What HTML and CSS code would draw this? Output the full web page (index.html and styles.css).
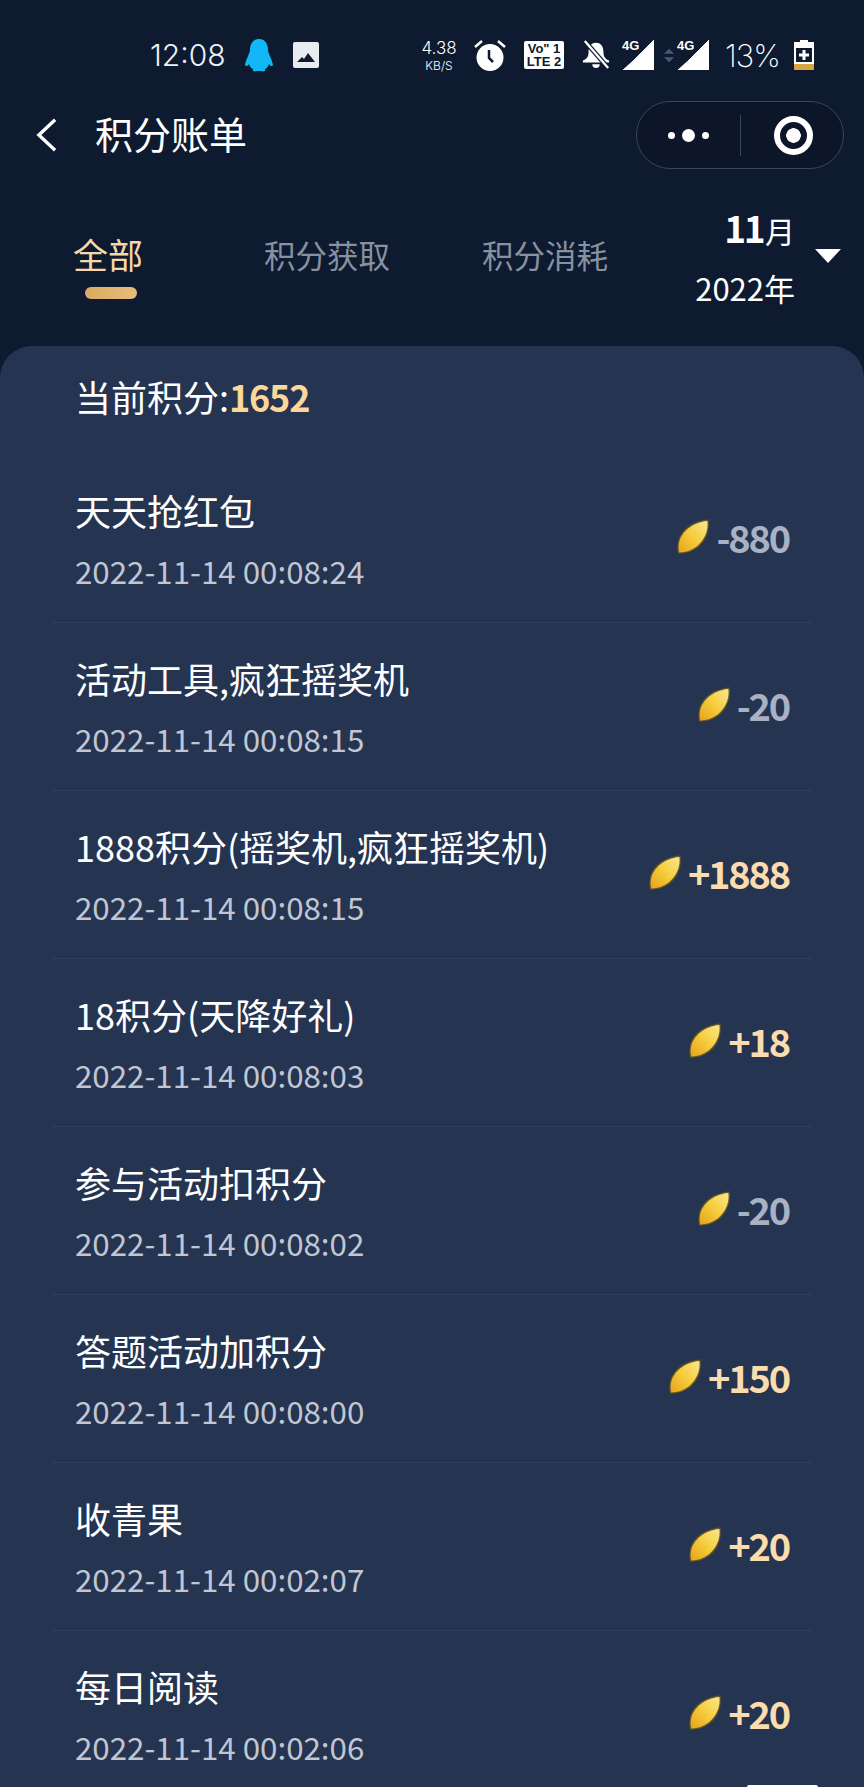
FILE: index.html
```html
<!DOCTYPE html>
<html>
  <head>
    <title>积分账单</title>
    <link rel="stylesheet" href="styles.css">
  </head>
  <body>
    <svg class="defs" width="0" height="0">
      <defs>
        <linearGradient id="grain-fill" x1="0" y1="1" x2="1" y2="0">
          <stop offset="0" stop-color="#e5a31c"/>
          <stop offset="0.5" stop-color="#f6cd3c"/>
          <stop offset="1" stop-color="#f9e88f"/>
        </linearGradient>
        <symbol id="grain" viewBox="0 0 30 33">
          <path d="M1 32.500C-3 15 11 2 29.500 0.500C32 15 22 33 1 32.500Z" fill="#6b5a24"/>
          <path d="M2 31.500C-1.500 16 12 3.500 28.500 2C30.500 15 20 31.500 2 31.500Z" fill="url(#grain-fill)"/>
        </symbol>
      </defs>
    </svg>
    <div class="page">
      <div class="status-bar">
        <span class="clock">12:08</span>
        <svg class="qq" viewBox="0 0 30 34"><path d="M15 1C8 1 6 7 6 12C6 15 2 21 1 27C2 29 4 28 5 26C6 29 7 30 9 31C8 33 10 34 13 33H17C20 34 22 33 21 31C23 30 24 29 25 26C26 28 28 29 29 27C28 21 24 15 24 12C24 7 22 1 15 1Z" fill="#12b7f5"/></svg>
        <svg class="gallery" viewBox="0 0 26 26"><rect width="26" height="26" rx="2" fill="#e8ebf0"/><path d="M4 20L9 15L11 17L15 11L22 20Z" fill="#0d1a30"/></svg>
        <span class="spacer"></span>
        <span class="speed"><b>4.38</b><i>KB/S</i></span>
        <svg class="alarm" viewBox="0 0 32 32"><circle cx="16" cy="18.500" r="13.500" fill="#fff"/><path d="M15 11V19L19 23" fill="none" stroke="#0d1a30" stroke-width="2.500"/><path d="M1 8L8 2M31 8L24 2" stroke="#fff" stroke-width="2.500"/></svg>
        <span class="volte"><span>Vo" 1</span><span>LTE 2</span></span>
        <svg class="bell" viewBox="0 0 30 32"><path d="M15 3C9 3 7 8 7 13C7 18 5 20 1 22V24H29V22C25 20 23 18 23 13C23 8 21 3 15 3ZM11 26C11 29 13 30 15 30C17 30 19 29 19 26Z" fill="#fff"/><path d="M3 1L28 30" stroke="#0d1a30" stroke-width="5"/><path d="M3 1L28 30" stroke="#fff" stroke-width="2.500"/></svg>
        <span class="signal"><em>4G</em></span>
        <svg class="updown" viewBox="0 0 12 16"><path d="M6 0L12 6H0ZM6 16L0 10H12Z" fill="#4c5873"/></svg>
        <span class="signal"><em>4G</em></span>
        <span class="battery-text">13%</span>
        <svg class="battery" viewBox="0 0 20 30"><path d="M6 0H14V2H20V30H0V2H6Z" fill="#fff"/><rect x="0" y="24" width="20" height="6" fill="#d9a441"/><rect x="2" y="8" width="16" height="14" fill="#0d1a30"/><path d="M8.500 10H11.500V13.500H15V16.500H11.500V20H8.500V16.500H5V13.500H8.500Z" fill="#fff"/></svg>
      </div>

      <div class="nav-bar">
        <svg class="back" viewBox="0 0 22 36"><path d="M20 2L3 18L20 34" fill="none" stroke="#fff" stroke-width="3.500"/></svg>
        <h1>积分账单</h1>
        <div class="capsule">
          <div class="capsule-part"><i class="dot"></i><i class="dot big"></i><i class="dot"></i></div>
          <div class="capsule-part"><i class="target"></i></div>
        </div>
      </div>

      <div class="tabs">
        <div class="tab active">全部</div>
        <div class="tab">积分获取</div>
        <div class="tab">积分消耗</div>
        <div class="date-picker">
          <div class="date-text">
            <div class="month"><b>11</b>月</div>
            <div class="year">2022年</div>
          </div>
          <i class="arrow"></i>
        </div>
      </div>

      <div class="sheet">
        <div class="current">当前积分:<b>1652</b></div>

        <div class="row">
          <div class="row-info"><div class="row-title">天天抢红包</div><div class="row-time">2022-11-14 00:08:24</div></div>
          <div class="row-points minus"><svg class="grain"><use href="#grain"/></svg>-880</div>
        </div>
        <div class="row">
          <div class="row-info"><div class="row-title">活动工具,疯狂摇奖机</div><div class="row-time">2022-11-14 00:08:15</div></div>
          <div class="row-points minus"><svg class="grain"><use href="#grain"/></svg>-20</div>
        </div>
        <div class="row">
          <div class="row-info"><div class="row-title">1888积分(摇奖机,疯狂摇奖机)</div><div class="row-time">2022-11-14 00:08:15</div></div>
          <div class="row-points"><svg class="grain"><use href="#grain"/></svg>+1888</div>
        </div>
        <div class="row">
          <div class="row-info"><div class="row-title">18积分(天降好礼)</div><div class="row-time">2022-11-14 00:08:03</div></div>
          <div class="row-points"><svg class="grain"><use href="#grain"/></svg>+18</div>
        </div>
        <div class="row">
          <div class="row-info"><div class="row-title">参与活动扣积分</div><div class="row-time">2022-11-14 00:08:02</div></div>
          <div class="row-points minus"><svg class="grain"><use href="#grain"/></svg>-20</div>
        </div>
        <div class="row">
          <div class="row-info"><div class="row-title">答题活动加积分</div><div class="row-time">2022-11-14 00:08:00</div></div>
          <div class="row-points"><svg class="grain"><use href="#grain"/></svg>+150</div>
        </div>
        <div class="row">
          <div class="row-info"><div class="row-title">收青果</div><div class="row-time">2022-11-14 00:02:07</div></div>
          <div class="row-points"><svg class="grain"><use href="#grain"/></svg>+20</div>
        </div>
        <div class="row">
          <div class="row-info"><div class="row-title">每日阅读</div><div class="row-time">2022-11-14 00:02:06</div></div>
          <div class="row-points"><svg class="grain"><use href="#grain"/></svg>+20</div>
        </div>
      </div>
      <div class="peek"></div>
    </div>
  </body>
</html>
```

FILE: styles.css
```css
* {
  box-sizing: border-box;
}
body {
  margin: 0;
  background-color: #0d1a30;
  font-family: "Noto Sans CJK SC", "Noto Sans", sans-serif;
  color: #fff;
}
.defs {
  display: block;
  height: 0;
}
.page {
  position: relative;
  width: 864px;
  height: 1787px;
  overflow: hidden;
}

/* status bar */
.status-bar {
  display: flex;
  align-items: center;
  height: 100px;
  padding: 28px 50px 18px 150px;
}
.status-bar > * {
  flex: none;
}
.clock {
  font-family: "Inter", sans-serif;
  font-size: 30px;
  font-weight: 300;
  color: #eef1f5;
}
.qq {
  width: 30px;
  height: 34px;
  margin-left: 18px;
}
.gallery {
  width: 26px;
  height: 26px;
  margin-left: 19px;
}
.status-bar > .spacer {
  flex: 1;
}
.speed {
  display: flex;
  flex-direction: column;
  align-items: center;
  width: 36px;
  font-family: "Inter", sans-serif;
  font-weight: 300;
  line-height: normal;
}
.speed b {
  font-size: 17px;
  font-weight: 300;
}
.speed i {
  font-size: 12px;
  font-style: normal;
}
.alarm {
  width: 32px;
  height: 32px;
  margin-left: 17px;
}
.volte {
  display: flex;
  flex-direction: column;
  justify-content: center;
  width: 40px;
  height: 28px;
  margin-left: 18px;
  border-radius: 2px;
  background-color: #fff;
  color: #0d1a30;
  font-family: "Liberation Sans", sans-serif;
  font-size: 13px;
  font-weight: 700;
  line-height: 13px;
  text-align: center;
}
.bell {
  width: 28px;
  height: 32px;
  margin: 0 13px 0 18px;
}
.signal {
  position: relative;
  width: 31px;
  height: 30px;
  background: linear-gradient(to bottom right, transparent 49.5%, #fff 50%);
}
.signal em {
  position: absolute;
  top: -2px;
  left: -1px;
  font-family: "Liberation Sans", sans-serif;
  font-size: 13px;
  font-style: normal;
  font-weight: 700;
}
.updown {
  width: 10px;
  height: 15px;
  margin: 0 4px 0 10px;
}
.battery-text {
  width: 60px;
  margin-left: 16px;
  font-family: "Inter", sans-serif;
  font-size: 31px;
  font-weight: 200;
  letter-spacing: -1px;
}
.battery {
  width: 20px;
  height: 30px;
  margin-left: 9px;
}

/* nav */
.nav-bar {
  display: flex;
  align-items: center;
  height: 70px;
  padding: 0 20px 0 36px;
}
.back {
  width: 21px;
  height: 36px;
}
.nav-bar h1 {
  flex: 1;
  margin: 0 0 4px 38px;
  font-size: 38px;
  font-weight: 400;
  line-height: 1;
}
.capsule {
  display: flex;
  align-items: center;
  width: 208px;
  height: 68px;
  border: 1px solid #3a465c;
  border-radius: 34px;
  background-color: #0c1628;
}
.capsule-part {
  display: flex;
  flex: 1;
  align-items: center;
  justify-content: center;
  gap: 7px;
  height: 41px;
}
.capsule-part:first-child {
  border-right: 1px solid #3a465c;
}
.dot {
  width: 7px;
  height: 7px;
  border-radius: 50%;
  background-color: #fff;
}
.dot.big {
  width: 13px;
  height: 13px;
}
.target {
  display: block;
  width: 39px;
  height: 39px;
  margin-left: 4px;
  border: 6px solid #fff;
  border-radius: 50%;
  background: radial-gradient(circle, #fff 0 7px, transparent 7.500px);
}

/* tabs */
.tabs {
  display: flex;
  gap: 92px;
  height: 176px;
  padding: 0 23px 0 73px;
}
.tab {
  position: relative;
  flex: none;
  margin-top: 63px;
  height: 42px;
  font-size: 31.5px;
  line-height: 42px;
  color: #87919f;
}
.tab.active {
  margin-right: 29px;
  font-size: 35px;
  color: #f7d8a8;
}
.tab.active::after {
  content: "";
  position: absolute;
  left: 12px;
  top: 54px;
  width: 52px;
  height: 12px;
  border-radius: 6px;
  background: linear-gradient(to right, #dcaa62, #e6bd7a);
}
.date-picker {
  display: flex;
  flex: 1;
  align-items: center;
  justify-content: flex-end;
  align-self: flex-start;
  margin-left: -92px;
  padding-top: 27px;
}
.date-text {
  text-align: right;
}
.month {
  font-size: 30px;
  line-height: 60px;
}
.month b {
  font-size: 37px;
  font-weight: 700;
  letter-spacing: -2.500px;
  margin-right: 2px;
}
.year {
  font-size: 31px;
  line-height: 55px;
}
.arrow {
  width: 0;
  height: 0;
  margin-left: 20px;
  border-left: 13.500px solid transparent;
  border-right: 13.500px solid transparent;
  border-top: 14px solid #fff;
}

/* list */
.sheet {
  height: 1441px;
  padding: 0 52px;
  overflow: hidden;
  border-radius: 32px 32px 0 0;
  background-color: #243451;
}
.current {
  height: 109px;
  padding: 26px 23px 0;
  font-size: 36px;
  line-height: 48px;
}
.current b {
  color: #fdd79a;
  font-weight: 700;
  letter-spacing: -1.200px;
}
.row {
  display: flex;
  flex: none;
  align-items: center;
  justify-content: space-between;
  height: 168px;
  padding: 0 23px;
  border-bottom: 1px solid #2f3f5c;
}
.row-title {
  font-size: 36px;
  line-height: 50px;
}
.row-time {
  margin-top: 15px;
  font-size: 31.3px;
  line-height: 42px;
  color: #c1c6d2;
}
.row-points {
  display: flex;
  align-items: center;
  gap: 7px;
  margin-bottom: 4px;
  font-size: 38px;
  font-weight: 700;
  letter-spacing: -2.200px;
  color: #fbdcae;
}
.row-points.minus {
  color: #a9b1c4;
}
.grain {
  width: 32px;
  height: 35px;
}
.peek {
  position: absolute;
  right: 46px;
  bottom: 0;
  width: 71px;
  height: 2px;
  border-radius: 2px 2px 0 0;
  background-color: #fff;
}
```
